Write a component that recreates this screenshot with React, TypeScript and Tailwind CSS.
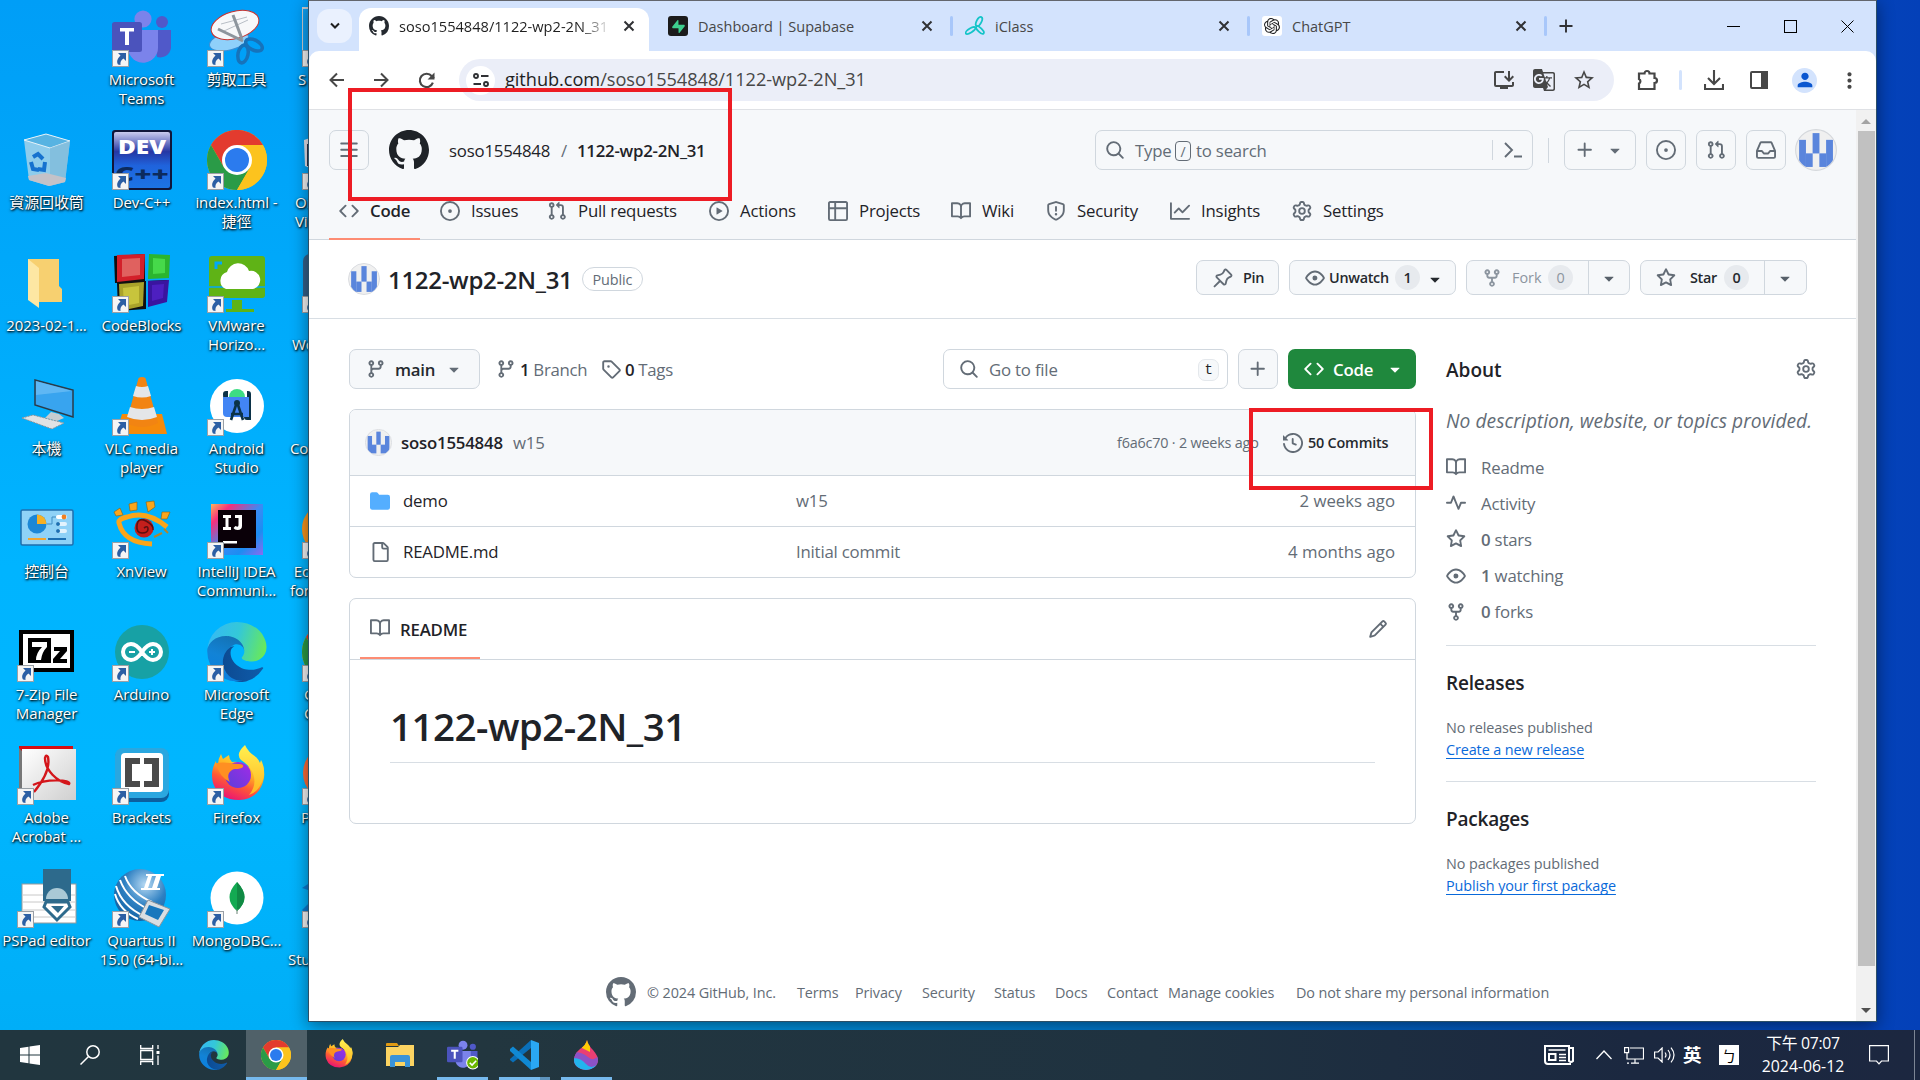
import React from "react";
import { SiSupabase, SiOpenai } from "react-icons/si";
import { MdGTranslate, MdStarBorder, MdMoreVert, MdPerson, MdOutlineInstallDesktop } from "react-icons/md";

/* ---------- 16px line icons ---------- */
const P = {
  code: "m11.28 3.22 4.25 4.25a.75.75 0 0 1 0 1.06l-4.25 4.25a.749.749 0 0 1-1.275-.326.749.749 0 0 1 .215-.734L13.94 8l-3.72-3.72a.749.749 0 0 1 .326-1.275.749.749 0 0 1 .734.215Zm-6.56 0a.751.751 0 0 1 1.042.018.751.751 0 0 1 .018 1.042L2.06 8l3.72 3.72a.749.749 0 0 1-.326 1.275.749.749 0 0 1-.734-.215L.47 8.53a.75.75 0 0 1 0-1.06Z",
  issue: "M8 9.5a1.5 1.5 0 1 0 0-3 1.5 1.5 0 0 0 0 3ZM8 0a8 8 0 1 1 0 16A8 8 0 0 1 8 0ZM1.5 8a6.5 6.5 0 1 0 13 0 6.5 6.5 0 0 0-13 0Z",
  pr: "M1.5 3.25a2.25 2.25 0 1 1 3 2.122v5.256a2.251 2.251 0 1 1-1.5 0V5.372A2.25 2.25 0 0 1 1.5 3.25Zm5.677-.177L9.573.677A.25.25 0 0 1 10 .854V2.5h1A2.5 2.5 0 0 1 13.5 5v5.628a2.251 2.251 0 1 1-1.5 0V5a1 1 0 0 0-1-1h-1v1.646a.25.25 0 0 1-.427.177L7.177 3.427a.25.25 0 0 1 0-.354ZM3.75 2.5a.75.75 0 1 0 0 1.5.75.75 0 0 0 0-1.5Zm0 9.5a.75.75 0 1 0 0 1.5.75.75 0 0 0 0-1.5Zm8.25.75a.75.75 0 1 0 1.5 0 .75.75 0 0 0-1.5 0Z",
  play: "M8 0a8 8 0 1 1 0 16A8 8 0 0 1 8 0ZM1.5 8a6.5 6.5 0 1 0 13 0 6.5 6.5 0 0 0-13 0Zm4.879-2.773 4.264 2.559a.25.25 0 0 1 0 .428l-4.264 2.559A.25.25 0 0 1 6 10.559V5.442a.25.25 0 0 1 .379-.215Z",
  table: "M0 1.75C0 .784.784 0 1.75 0h12.5C15.216 0 16 .784 16 1.75v12.5A1.75 1.75 0 0 1 14.25 16H1.75A1.75 1.75 0 0 1 0 14.25ZM6.5 6.5v8h7.75a.25.25 0 0 0 .25-.25V6.5Zm8-1.5V1.75a.25.25 0 0 0-.25-.25H6.5V5Zm-13 1.5v7.75c0 .138.112.25.25.25H5v-8ZM5 5V1.5H1.75a.25.25 0 0 0-.25.25V5Z",
  book: "M0 1.75A.75.75 0 0 1 .75 1h4.253c1.227 0 2.317.59 3 1.501A3.743 3.743 0 0 1 11.006 1h4.245a.75.75 0 0 1 .75.75v10.5a.75.75 0 0 1-.75.75h-4.507a2.25 2.25 0 0 0-1.591.659l-.622.621a.75.75 0 0 1-1.06 0l-.622-.621A2.25 2.25 0 0 0 5.258 13H.75a.75.75 0 0 1-.75-.75Zm7.251 10.324.004-5.073-.002-2.253A2.25 2.25 0 0 0 5.003 2.5H1.5v9h3.757a3.75 3.75 0 0 1 1.994.574ZM8.755 4.75l-.004 7.322a3.752 3.752 0 0 1 1.992-.572H14.5v-9h-3.495a2.25 2.25 0 0 0-2.25 2.25Z",
  shield: "M7.467.133a1.748 1.748 0 0 1 1.066 0l5.25 1.68A1.75 1.75 0 0 1 15 3.48V7c0 1.566-.32 3.182-1.303 4.682-.983 1.498-2.585 2.813-5.032 3.855a1.697 1.697 0 0 1-1.33 0c-2.447-1.042-4.049-2.357-5.032-3.855C1.32 10.182 1 8.566 1 7V3.48a1.75 1.75 0 0 1 1.217-1.667Zm.61 1.429a.25.25 0 0 0-.153 0l-5.25 1.68a.25.25 0 0 0-.174.238V7c0 1.358.275 2.666 1.057 3.86.784 1.194 2.121 2.34 4.366 3.297a.196.196 0 0 0 .154 0c2.245-.956 3.582-2.104 4.366-3.298C13.225 9.666 13.5 8.36 13.5 7V3.48a.251.251 0 0 0-.174-.237l-5.25-1.68ZM8.75 4.75v3a.75.75 0 0 1-1.5 0v-3a.75.75 0 0 1 1.5 0ZM9 10.5a1 1 0 1 1-2 0 1 1 0 0 1 2 0Z",
  graph: "M1.5 1.75V13.5h13.75a.75.75 0 0 1 0 1.5H.75a.75.75 0 0 1-.75-.75V1.75a.75.75 0 0 1 1.5 0Zm14.28 2.53-5.25 5.25a.75.75 0 0 1-1.06 0L7 7.06 4.28 9.78a.751.751 0 0 1-1.042-.018.751.751 0 0 1-.018-1.042l3.25-3.25a.75.75 0 0 1 1.06 0L10 7.94l4.72-4.72a.751.751 0 0 1 1.042.018.751.751 0 0 1 .018 1.042Z",
  gear: "M8 0a8.2 8.2 0 0 1 .701.031C9.444.095 9.99.645 10.16 1.29l.288 1.107c.018.066.079.158.212.224.231.114.454.243.668.386.123.082.233.09.299.071l1.103-.303c.644-.176 1.392.021 1.82.63.27.385.506.792.704 1.218.315.675.111 1.422-.364 1.891l-.814.806c-.049.048-.098.147-.088.294.016.257.016.515 0 .772-.01.147.038.246.088.294l.814.806c.475.469.679 1.216.364 1.891a7.977 7.977 0 0 1-.704 1.217c-.428.61-1.176.807-1.82.63l-1.102-.302c-.067-.019-.177-.011-.3.071a5.909 5.909 0 0 1-.668.386c-.133.066-.194.158-.211.224l-.29 1.106c-.168.646-.715 1.196-1.458 1.26a8.006 8.006 0 0 1-1.402 0c-.743-.064-1.289-.614-1.458-1.26l-.289-1.106c-.018-.066-.079-.158-.212-.224a5.738 5.738 0 0 1-.668-.386c-.123-.082-.233-.09-.299-.071l-1.103.303c-.644.176-1.392-.021-1.82-.63a8.12 8.12 0 0 1-.704-1.218c-.315-.675-.111-1.422.363-1.891l.815-.806c.05-.048.098-.147.088-.294a6.214 6.214 0 0 1 0-.772c.01-.147-.038-.246-.088-.294l-.815-.806C.635 6.045.431 5.298.746 4.623a7.92 7.92 0 0 1 .704-1.217c.428-.61 1.176-.807 1.82-.63l1.102.302c.067.019.177.011.3-.071.214-.143.437-.272.668-.386.133-.066.194-.158.211-.224l.29-1.106C6.009.645 6.556.095 7.299.03 7.53.01 7.764 0 8 0Zm-.571 1.525c-.036.003-.108.036-.137.146l-.289 1.105c-.147.561-.549.967-.998 1.189-.173.086-.34.183-.5.29-.417.278-.97.423-1.529.27l-1.103-.303c-.109-.03-.175.016-.195.045-.22.312-.412.644-.573.99-.014.031-.021.11.059.19l.815.806c.411.406.562.957.53 1.456a4.709 4.709 0 0 0 0 .582c.032.499-.119 1.05-.53 1.456l-.815.806c-.081.08-.073.159-.059.19.162.346.353.677.573.989.02.03.085.076.195.046l1.102-.303c.56-.153 1.113-.008 1.53.27.161.107.328.204.501.29.447.222.85.629.997 1.189l.289 1.105c.029.109.101.143.137.146a6.6 6.6 0 0 0 1.142 0c.036-.003.108-.036.137-.146l.289-1.105c.147-.561.549-.967.998-1.189.173-.086.34-.183.5-.29.417-.278.97-.423 1.529-.27l1.103.303c.109.029.175-.016.195-.045.22-.313.411-.644.573-.99.014-.031.021-.11-.059-.19l-.815-.806c-.411-.406-.562-.957-.53-1.456a4.709 4.709 0 0 0 0-.582c-.032-.499.119-1.05.53-1.456l.815-.806c.081-.08.073-.159.059-.19a6.464 6.464 0 0 0-.573-.989c-.02-.03-.085-.076-.195-.046l-1.102.303c-.56.153-1.113.008-1.53-.27a4.44 4.44 0 0 0-.501-.29c-.447-.222-.85-.629-.997-1.189l-.289-1.105c-.029-.11-.101-.143-.137-.146a6.6 6.6 0 0 0-1.142 0ZM11 8a3 3 0 1 1-6 0 3 3 0 0 1 6 0ZM9.5 8a1.5 1.5 0 1 0-3.001.001A1.5 1.5 0 0 0 9.5 8Z",
  pin: "m11.294.984 3.722 3.722a1.75 1.75 0 0 1-.504 2.826l-1.327.613a3.089 3.089 0 0 0-1.707 2.084l-.584 2.454c-.317 1.332-1.972 1.8-2.94.832L5.75 11.311 1.78 15.28a.749.749 0 1 1-1.06-1.06l3.969-3.97-2.204-2.204c-.968-.968-.5-2.623.832-2.94l2.454-.584a3.08 3.08 0 0 0 2.084-1.707l.613-1.327a1.75 1.75 0 0 1 2.826-.504ZM6.283 9.723l2.732 2.731a.25.25 0 0 0 .42-.119l.584-2.454a4.586 4.586 0 0 1 2.537-3.098l1.328-.613a.25.25 0 0 0 .072-.404l-3.722-3.722a.25.25 0 0 0-.404.072l-.613 1.328a4.584 4.584 0 0 1-3.098 2.537l-2.454.584a.25.25 0 0 0-.119.42l2.731 2.732Z",
  eye: "M8 2c1.981 0 3.671.992 4.933 2.078 1.27 1.091 2.187 2.345 2.637 3.023a1.62 1.62 0 0 1 0 1.798c-.45.678-1.367 1.932-2.637 3.023C11.67 13.008 9.981 14 8 14c-1.981 0-3.671-.992-4.933-2.078C1.797 10.83.88 9.576.43 8.898a1.62 1.62 0 0 1 0-1.798c.45-.677 1.367-1.931 2.637-3.022C4.33 2.992 6.019 2 8 2ZM1.679 7.932a.12.12 0 0 0 0 .136c.411.622 1.241 1.75 2.366 2.717C5.176 11.758 6.527 12.5 8 12.5c1.473 0 2.825-.742 3.955-1.715 1.124-.967 1.954-2.096 2.366-2.717a.12.12 0 0 0 0-.136c-.412-.621-1.242-1.75-2.366-2.717C10.824 4.242 9.473 3.5 8 3.5c-1.473 0-2.825.742-3.955 1.715-1.124.967-1.954 2.096-2.366 2.717ZM8 10a2 2 0 1 1-.001-3.999A2 2 0 0 1 8 10Z",
  fork: "M5 5.372v.878c0 .414.336.75.75.75h4.5a.75.75 0 0 0 .75-.75v-.878a2.25 2.25 0 1 1 1.5 0v.878a2.25 2.25 0 0 1-2.25 2.25h-1.5v2.128a2.251 2.251 0 1 1-1.5 0V8.5h-1.5A2.25 2.25 0 0 1 3.5 6.25v-.878a2.25 2.25 0 1 1 1.5 0ZM5 3.25a.75.75 0 1 0-1.5 0 .75.75 0 0 0 1.5 0Zm6.75.75a.75.75 0 1 0 0-1.5.75.75 0 0 0 0 1.5Zm-3 8.75a.75.75 0 1 0-1.5 0 .75.75 0 0 0 1.5 0Z",
  star: "M8 .25a.75.75 0 0 1 .673.418l1.882 3.815 4.21.612a.75.75 0 0 1 .416 1.279l-3.046 2.97.719 4.192a.751.751 0 0 1-1.088.791L8 12.347l-3.766 1.98a.75.75 0 0 1-1.088-.79l.72-4.194L.818 6.374a.75.75 0 0 1 .416-1.28l4.21-.611L7.327.668A.75.75 0 0 1 8 .25Zm0 2.445L6.615 5.5a.75.75 0 0 1-.564.41l-3.097.45 2.24 2.184a.75.75 0 0 1 .216.664l-.528 3.084 2.769-1.456a.75.75 0 0 1 .698 0l2.77 1.456-.53-3.084a.75.75 0 0 1 .216-.664l2.24-2.183-3.096-.45a.75.75 0 0 1-.564-.41L8 2.694Z",
  caret: "m4.427 7.427 3.396 3.396a.25.25 0 0 0 .354 0l3.396-3.396A.25.25 0 0 0 11.396 7H4.604a.25.25 0 0 0-.177.427Z",
  branch: "M9.5 3.25a2.25 2.25 0 1 1 3 2.122V6A2.5 2.5 0 0 1 10 8.5H6a1 1 0 0 0-1 1v1.128a2.251 2.251 0 1 1-1.5 0V5.372a2.25 2.25 0 1 1 1.5 0v1.836A2.493 2.493 0 0 1 6 7h4a1 1 0 0 0 1-1v-.628A2.25 2.25 0 0 1 9.5 3.25Zm-6 0a.75.75 0 1 0 1.5 0 .75.75 0 0 0-1.5 0Zm8.25-.75a.75.75 0 1 0 0 1.5.75.75 0 0 0 0-1.5ZM4.25 12a.75.75 0 1 0 0 1.5.75.75 0 0 0 0-1.5Z",
  tag: "M1 7.775V2.75C1 1.784 1.784 1 2.75 1h5.025c.464 0 .91.184 1.238.513l6.25 6.25a1.75 1.75 0 0 1 0 2.474l-5.026 5.026a1.75 1.75 0 0 1-2.474 0l-6.25-6.25A1.752 1.752 0 0 1 1 7.775Zm1.5 0c0 .066.026.13.073.177l6.25 6.25a.25.25 0 0 0 .354 0l5.025-5.025a.25.25 0 0 0 0-.354l-6.25-6.25a.25.25 0 0 0-.177-.073H2.75a.25.25 0 0 0-.25.25ZM6 5a1 1 0 1 1 0 2 1 1 0 0 1 0-2Z",
  search: "M10.68 11.74a6 6 0 0 1-7.922-8.982 6 6 0 0 1 8.982 7.922l3.04 3.04a.749.749 0 0 1-.326 1.275.749.749 0 0 1-.734-.215ZM11.5 7a4.499 4.499 0 1 0-8.997 0A4.499 4.499 0 0 0 11.5 7Z",
  plus: "M7.75 2a.75.75 0 0 1 .75.75V7h4.25a.75.75 0 0 1 0 1.5H8.5v4.25a.75.75 0 0 1-1.5 0V8.5H2.75a.75.75 0 0 1 0-1.5H7V2.75A.75.75 0 0 1 7.75 2Z",
  history: "m.427 1.927 1.215 1.215a8.002 8.002 0 1 1-1.6 5.685.75.75 0 1 1 1.493-.154 6.5 6.5 0 1 0 1.18-4.458l1.358 1.358A.25.25 0 0 1 3.896 6H.25A.25.25 0 0 1 0 5.75V2.104a.25.25 0 0 1 .427-.177ZM7.75 4a.75.75 0 0 1 .75.75v2.992l2.028.812a.75.75 0 0 1-.557 1.392l-2.5-1A.751.751 0 0 1 7 8.25v-3.5A.75.75 0 0 1 7.75 4Z",
  pencil: "M11.013 1.427a1.75 1.75 0 0 1 2.474 0l1.086 1.086a1.75 1.75 0 0 1 0 2.474l-8.61 8.61c-.21.21-.47.364-.756.445l-3.251.93a.75.75 0 0 1-.927-.928l.929-3.25c.081-.286.235-.547.445-.758l8.61-8.61Zm.176 4.823L9.75 4.81l-6.286 6.287a.253.253 0 0 0-.064.108l-.558 1.953 1.953-.558a.253.253 0 0 0 .108-.064Zm1.238-3.763a.25.25 0 0 0-.354 0L10.811 3.75l1.439 1.44 1.263-1.263a.25.25 0 0 0 0-.354Z",
  pulse: "M6 2c.306 0 .582.187.696.471L10 10.731l1.304-3.26A.751.751 0 0 1 12 7h3.25a.75.75 0 0 1 0 1.5h-2.742l-1.812 4.528a.751.751 0 0 1-1.392 0L6 4.77 4.696 8.03A.75.75 0 0 1 4 8.5H.75a.75.75 0 0 1 0-1.5h2.742l1.812-4.529A.751.751 0 0 1 6 2Z",
  bars: "M1 2.75A.75.75 0 0 1 1.75 2h12.5a.75.75 0 0 1 0 1.5H1.75A.75.75 0 0 1 1 2.75Zm0 5A.75.75 0 0 1 1.75 7h12.5a.75.75 0 0 1 0 1.5H1.75A.75.75 0 0 1 1 7.75ZM1.75 12h12.5a.75.75 0 0 1 0 1.5H1.75a.75.75 0 0 1 0-1.5Z",
  inbox: "M2.8 2.06A1.75 1.75 0 0 1 4.41 1h7.18c.7 0 1.333.417 1.61 1.06l2.74 6.395c.04.093.06.194.06.295v4.5A1.75 1.75 0 0 1 14.25 15H1.75A1.75 1.75 0 0 1 0 13.25v-4.5c0-.101.02-.202.06-.295Zm1.61.44a.25.25 0 0 0-.23.152L1.887 8H4.75a.75.75 0 0 1 .6.3L6.625 10h2.75l1.275-1.7a.75.75 0 0 1 .6-.3h2.863L11.82 2.652a.25.25 0 0 0-.23-.152Zm10.09 7h-2.875l-1.275 1.7a.75.75 0 0 1-.6.3h-3.5a.75.75 0 0 1-.6-.3L4.375 9.5H1.5v3.75c0 .138.112.25.25.25h12.5a.25.25 0 0 0 .25-.25Z",
  github: "M8 0c4.42 0 8 3.58 8 8a8.013 8.013 0 0 1-5.45 7.59c-.4.08-.55-.17-.55-.38 0-.27.01-1.13.01-2.2 0-.75-.25-1.23-.54-1.48 1.78-.2 3.65-.88 3.65-3.95 0-.88-.31-1.59-.82-2.15.08-.2.36-1.02-.08-2.12 0 0-.67-.22-2.2.82-.64-.18-1.32-.27-2-.27-.68 0-1.36.09-2 .27-1.53-1.03-2.2-.82-2.2-.82-.44 1.1-.16 1.92-.08 2.12-.51.56-.82 1.28-.82 2.15 0 3.06 1.86 3.75 3.64 3.95-.23.2-.44.55-.51 1.07-.46.21-1.61.55-2.33-.66-.15-.24-.6-.83-1.23-.82-.67.01-.27.38.01.53.34.19.73.9.82 1.13.16.45.68 1.31 2.69.94 0 .67.01 1.3.01 1.49 0 .21-.15.45-.55.38A7.995 7.995 0 0 1 0 8c0-4.42 3.58-8 8-8Z",
  file: "M2 1.75C2 .784 2.784 0 3.75 0h6.586c.464 0 .909.184 1.237.513l2.914 2.914c.329.328.513.773.513 1.237v9.586A1.75 1.75 0 0 1 13.25 16h-9.5A1.75 1.75 0 0 1 2 14.25Zm1.75-.25a.25.25 0 0 0-.25.25v12.5c0 .138.112.25.25.25h9.5a.25.25 0 0 0 .25-.25V6h-2.75A1.75 1.75 0 0 1 9 4.25V1.5Zm6.75.062V4.25c0 .138.112.25.25.25h2.688l-.011-.013-2.914-2.914-.013-.011Z",
  folder: "M1.75 1A1.75 1.75 0 0 0 0 2.75v10.5C0 14.216.784 15 1.75 15h12.5A1.75 1.75 0 0 0 16 13.25v-8.5A1.75 1.75 0 0 0 14.25 3H7.5a.25.25 0 0 1-.2-.1l-.9-1.2C6.07 1.26 5.55 1 5 1H1.75Z",
};

function Oct({ p, className = "size-5 text-[#636c76]" }: { p: keyof typeof P; className?: string }) {
  return (
    <svg viewBox="0 0 16 16" fill="currentColor" className={`shrink-0 ${className}`}>
      <path d={P[p]} />
    </svg>
  );
}

function Avatar({ className }: { className: string }) {
  const c = 6.75;
  const cells = [[2, 0, 1, 3], [0, 1, 1, 4], [4, 1, 1, 4], [1, 3, 1, 2], [3, 3, 1, 2]];
  return (
    <svg viewBox="0 0 42 42" className={`shrink-0 ${className}`}>
      <circle cx="21" cy="21" r="20.4" fill="#f0f0f0" stroke="#d5d8dc" strokeWidth="1.1" />
      <clipPath id="avatar-clip"><circle cx="21" cy="21" r="19.8" /></clipPath>
      <g clipPath="url(#avatar-clip)" fill="#5a85dc">
        {cells.map(([x, y, w, h], i) => (
          <rect key={i} x={4.1 + x * c} y={4.1 + y * c} width={w * c + 0.1} height={h * c + 0.1} />
        ))}
      </g>
    </svg>
  );
}

/* ---------- application logos ---------- */
function Chrome({ className = "size-full" }) {
  return (
    <svg viewBox="0 0 60 60" className={className}>
      <circle cx="30" cy="30" r="30" fill="#fcc31e" />
      <path d="M4 15A30 30 0 0 1 56 15H30L17 37.5Z" fill="#e33b2e" />
      <path d="M4 15A30 30 0 0 0 30 60L43 37.5H17Z" fill="#2a9b47" />
      <path d="M30 60A30 30 0 0 0 56 15H30L43 37.5Z" fill="#fcc31e" />
      <circle cx="30" cy="30" r="15" fill="#fff" />
      <circle cx="30" cy="30" r="12" fill="#2b7bee" />
    </svg>
  );
}

function Edge({ className = "size-full" }) {
  return (
    <svg viewBox="0 0 257 259" className={className}>
      <defs>
        <linearGradient id="edge-a" x1="0" y1=".3" x2="1" y2=".5"><stop offset="0" stopColor="#35b9f5" /><stop offset=".5" stopColor="#34c8d8" /><stop offset="1" stopColor="#67e85d" /></linearGradient>
        <linearGradient id="edge-b" x1=".6" y1="0" x2=".3" y2="1"><stop offset="0" stopColor="#1470b0" /><stop offset=".5" stopColor="#1283d6" /><stop offset="1" stopColor="#0a7fe0" /></linearGradient>
        <linearGradient id="edge-c" x1="0" y1="0" x2="1" y2="0"><stop offset="0" stopColor="#0c4a92" /><stop offset="1" stopColor="#0f5caa" /></linearGradient>
      </defs>
      <path fill="url(#edge-c)" d="M235.68 195.46a93.73 93.73 0 0 1-10.54 4.71 101.87 101.87 0 0 1-35.9 6.46c-47.32 0-88.54-32.55-88.54-74.32A31.48 31.48 0 0 1 117.13 105c-42.8 1.8-53.8 46.4-53.8 72.53 0 73.88 68.09 81.37 82.76 81.37 7.91 0 19.84-2.3 27-4.56l1.31-.44a128.34 128.34 0 0 0 66.6-52.8 4 4 0 0 0-5.32-5.64Z" />
      <path fill="url(#edge-b)" d="M105.73 241.42A79.2 79.2 0 0 1 83 220.08a80.72 80.72 0 0 1 29.53-120c3.12-1.47 8.45-4.13 15.54-4a32.35 32.35 0 0 1 25.69 13 31.88 31.88 0 0 1 6.36 18.66c0-.21 24.46-79.6-80-79.6-43.9 0-80 41.66-80 78.21a130.15 130.15 0 0 0 12.11 56 128 128 0 0 0 156.38 67.11 75.55 75.55 0 0 1-62.78-8Z" />
      <path fill="url(#edge-a)" d="M152.33 148.86c-.81 1.05-3.3 2.5-3.3 5.66 0 2.61 1.7 5.12 4.72 7.23 14.38 10 41.49 8.68 41.56 8.68a59.56 59.56 0 0 0 30.27-8.35A61.38 61.38 0 0 0 256 109.2c.26-22.41-8-37.31-11.34-43.91C223.46 23.84 177.72 0 128 0A128 128 0 0 0 0 126.2c.48-36.54 36.8-66.05 80-66.05 3.5 0 23.46.34 42 10.07 16.34 8.58 24.9 18.94 30.85 29.21 6.18 10.67 7.28 24.15 7.28 29.52s-2.74 13.33-7.8 19.91Z" />
    </svg>
  );
}

function Firefox({ className = "size-full" }) {
  return (
    <svg viewBox="0 0 60 60" className={className}>
      <defs>
        <linearGradient id="ff-a" x1=".8" y1="0" x2=".3" y2="1"><stop offset="0" stopColor="#ffe93f" /><stop offset=".4" stopColor="#ffb223" /><stop offset=".65" stopColor="#ff5a34" /><stop offset="1" stopColor="#ea0f78" /></linearGradient>
        <linearGradient id="ff-b" x1="0" y1="1" x2="1" y2="0"><stop offset="0" stopColor="#5b3fd8" /><stop offset="1" stopColor="#a32ae8" /></linearGradient>
        <linearGradient id="ff-c" x1=".5" y1="0" x2=".5" y2="1"><stop offset="0" stopColor="#fff150" /><stop offset="1" stopColor="#ffb521" /></linearGradient>
      </defs>
      <path d="M14 9q1 3 2 5l6-4q0 4 3 7 10-1 16 5l14-3q4 9 1 18Q51 54 32 55 12 55 6 38 3 26 9 16q0 3 2 4 0-6 3-11Z" fill="url(#ff-a)" />
      <path d="M38 0q3 7 11 12 3 3 4 6l1-3q5 9 2 19-4 13-14 16 7-8 5-18Q45 22 34 15q-6-6 4-15Z" fill="url(#ff-c)" />
      <circle cx="31" cy="30" r="13" fill="url(#ff-b)" />
      <path d="M9 18q7-1 14 0 4 1 9 1 5 0 4 3-2 2-8 2-3 0-6 4-2 4 1 9Q12 32 9 18Z" fill="#ff8f22" />
    </svg>
  );
}

function Teams({ className = "size-full", status = false }) {
  return (
    <svg viewBox="0 0 60 60" className={className}>
      <circle cx="50" cy="15" r="6" fill="#5059c9" />
      <path d="M42 23h17v18a11 11 0 0 1-14 9Z" fill="#5059c9" />
      <circle cx="31" cy="12" r="8.6" fill="#7b83eb" />
      <path d="M17 23h29v18a15 15 0 0 1-29 5Z" fill="#7b83eb" />
      <rect y="15" width="30" height="30" rx="2.5" fill="#4b53bc" />
      <path d="M8 21h14v3.6h-5V38h-4V24.600H8Z" fill="#fff" />
      {status && (
        <g>
          <circle cx="50" cy="46" r="12" fill="#6bb700" stroke="#fff" strokeWidth="2" />
          <path d="m44 46 4.500 4.500 8-8.500" fill="none" stroke="#fff" strokeWidth="3" />
        </g>
      )}
    </svg>
  );
}

const icon = "size-full";
const Snip = () => (
  <svg viewBox="0 0 60 60" className={icon}>
    <ellipse cx="22" cy="34" rx="20" ry="9" fill="#8fd0fa" stroke="#3a8fd6" transform="rotate(-14 22 34)" />
    <ellipse cx="28" cy="18" rx="24.500" ry="13.500" fill="#f7f8fa" stroke="#c9332f" strokeWidth="1" transform="rotate(-16 28 18)" />
    <path d="M14 17 40 10M17 24l24-11" stroke="#b8bec6" />
    <path d="M26 8 35 32M11 22 36 34" stroke="#8d959d" strokeWidth="3" />
    <ellipse cx="36" cy="47" rx="5" ry="9" fill="none" stroke="#1673bb" strokeWidth="3.500" transform="rotate(12 36 47)" />
    <ellipse cx="47" cy="38" rx="9" ry="5" fill="none" stroke="#1673bb" strokeWidth="3.500" transform="rotate(28 47 38)" />
  </svg>
);
const Bin = () => (
  <svg viewBox="0 0 60 60" className={icon}>
    <path d="M7 10 29 4l24 7-5 41-16 4-20-6Z" fill="#a7d3ea" fillOpacity=".85" />
    <path d="M7 10 29 4l24 7-20 7Z" fill="#57b3e2" stroke="#e6f3fa" />
    <path d="M33 18v38l15-4 5-41Z" fill="#7fb9d8" fillOpacity=".7" />
    <path d="m11 46 18-3 20 5-1 4-16 4-20-6Z" fill="#c4c2c8" />
    <path d="m16 27 5-3 5 5M14 32l2 7 6 1M28 32l-1 8-6-1" fill="none" stroke="#1672cf" strokeWidth="4" />
  </svg>
);
const DevCpp = () => (
  <svg viewBox="0 0 60 60" className={icon}>
    <defs><linearGradient id="dev" x1="0" y1="0" x2="0" y2="1"><stop offset="0" stopColor="#c9cbee" /><stop offset=".35" stopColor="#2637a4" /><stop offset=".6" stopColor="#1f63dc" /><stop offset="1" stopColor="#1c74e4" /></linearGradient></defs>
    <rect width="60" height="60" rx="3" fill="#10163a" />
    <rect x="2" y="2" width="56" height="56" rx="2" fill="url(#dev)" />
    <text x="6" y="24" textLength="48" lengthAdjust="spacingAndGlyphs" fontFamily="Open Sans" fontWeight="800" fontSize="19" fill="#fff">DEV</text>
    <text x="3" y="51" textLength="54" lengthAdjust="spacingAndGlyphs" fontFamily="Open Sans" fontWeight="800" fontSize="20" fill="#0c2a5c">C++</text>
  </svg>
);
const Folder = () => (
  <svg viewBox="0 0 60 60" className={icon}>
    <path d="M11 6h31v27l3 3v13H14Z" fill="#f7d070" />
    <path d="m11 6 11 9v40L11 47Z" fill="#fde7a3" />
  </svg>
);
const CodeBlocks = () => (
  <svg viewBox="0 0 60 60" className={icon}>
    <path d="m2 3 31-2v27l23-1-1 1H34v28L6 58l-1-28H3Z" fill="#101010" />
    <path d="m5 2 28-1-1 25-27 3Z" fill="#d3202a" /><path d="m10 6 18-1v17l-18 2Z" fill="#e0615f" />
    <path d="m37 1 21 1-1 23-21 1Z" fill="#2bb52f" /><path d="m41 5 12 1v14l-12 1Z" fill="#46d94a" />
    <path d="m7 31 25-2-1 24-23 5Z" fill="#a9a32a" /><path d="m11 35 16-2v17l-15 3Z" fill="#c8c43c" />
    <path d="m36 28 21-1-2 22-19 5Z" fill="#3a159f" /><path d="m40 32 12-1-1 14-11 3Z" fill="#4d1fc0" />
  </svg>
);
const VMware = () => (
  <svg viewBox="0 0 60 60" className={icon}>
    <rect x="2" y="3" width="56" height="42" rx="3" fill="#5fb316" />
    <path d="M25 47h10v9h12v3H19v-3h6Z" fill="#5fb316" />
    <path d="M2 34h56" stroke="#00a8fa" strokeWidth="1.500" />
    <path d="M9 16V10h6" fill="none" stroke="#00a8fa" strokeWidth="3" />
    <path d="M19 36a9 9 0 0 1 1-17 11.500 11.500 0 0 1 22-1 9 9 0 0 1 4 18Z" fill="#fff" />
  </svg>
);
const ThisPC = () => (
  <svg viewBox="0 0 60 60" className={icon}>
    <path d="m18 4 38 10v27L18 29Z" fill="#38a4ef" stroke="#2b3b49" strokeWidth="1.500" />
    <path d="m19 5 36 10-36 4Z" fill="#79c5f7" fillOpacity=".6" />
    <path d="m34 36 8 2 5 4-7 3-12-3Z" fill="#c7ccd0" />
    <path d="m5 42 11-3 31 8-12 6Z" fill="#dfe2e4" stroke="#8d959b" strokeDasharray="2 1" />
  </svg>
);
const VLC = () => (
  <svg viewBox="0 0 60 60" className={icon}>
    <path d="M10 38h40l5 20H4Z" fill="#f58a0b" />
    <path d="M26 4q0-3 4-3t4 3l12 43q-16 8-32 0Z" fill="#f28412" />
    <path d="m24 10-3 10q9 3 18 0l-3-10q-6 2-12 0ZM18 31l-3 10q15 6 30 0l-3-10q-12 4-24 0Z" fill="#e4e6e8" />
  </svg>
);
const AndroidStudio = () => (
  <svg viewBox="0 0 60 60" className={icon}>
    <circle cx="30" cy="30" r="27" fill="#fff" />
    <path d="M16 18q0-3 3-3h22q3 0 3 3v26h-4q-3 0-3-3v-2H17Z" fill="#0b3247" />
    <path d="M21 15h19v7H21Z" fill="#fff" />
    <path d="M16 21h26v20H20q-4 0-4-4Z" fill="#4285f4" />
    <path d="M22 21a8 8 0 0 1 16 0Z" fill="#3ddc84" />
    <path d="m30 26-6 18M30 26l6 18M24 38h12" stroke="#0b3247" strokeWidth="2.600" fill="none" />
    <circle cx="30" cy="27" r="3" fill="#0b3247" />
  </svg>
);
const ControlPanel = () => (
  <svg viewBox="0 0 60 60" className={icon}>
    <rect x="4" y="11" width="52" height="35" rx="1.500" fill="#8fd2f7" stroke="#1f6fae" strokeWidth="1.500" />
    <circle cx="20" cy="25" r="9.500" fill="#1c87d6" /><path d="M20 25V15.500A9.500 9.500 0 0 1 29.500 25Z" fill="#f7b025" />
    <path d="M30 25h5v-7h4" fill="none" stroke="#3f8dc4" />
    <rect x="39" y="16" width="11" height="4" rx="2" fill="#fff" /><circle cx="47" cy="18" r="2.400" fill="#f08021" />
    <rect x="39" y="23" width="11" height="4" rx="2" fill="#e2f3fd" /><circle cx="41" cy="25" r="2" fill="#1b6fb3" />
    <rect x="39" y="30" width="11" height="4" rx="2" fill="#e2f3fd" /><circle cx="41" cy="32" r="2" fill="#1b6fb3" />
    <path d="M11 40h18" stroke="#f3a62e" strokeWidth="2" /><path d="M31 40h18" stroke="#1b6fb3" strokeWidth="2" />
  </svg>
);
const XnView = () => (
  <svg viewBox="0 0 60 60" className={icon}>
    <g fill="#fba51a" stroke="#8a5f0d" strokeWidth=".6"><path d="m2 13 6-4 3 7-7 1ZM17 5l8-2v8l-7 1ZM34 3l8-1 1 6-7 5ZM50 13l8 0-3 7-6 0Z" /></g>
    <path d="M55 28Q35 11 15 18 6 20 7 24q5 20 33 21" fill="none" stroke="#fba51a" strokeWidth="5" />
    <circle cx="32" cy="29" r="9.500" fill="#c31f1c" />
    <path d="M32 29q4-3 4 1t-6 4-5-8 9-4 7 9" fill="none" stroke="#5a0f12" strokeWidth="1.600" />
    <path d="m42 38 8-4M52 30l4 4" stroke="#b4832a" strokeWidth="2" />
  </svg>
);
const IntelliJ = () => (
  <svg viewBox="0 0 60 60" className={icon}>
    <defs><linearGradient id="ij" x1="0" y1="0" x2="1" y2="1"><stop offset="0" stopColor="#ffb25a" /><stop offset=".2" stopColor="#f4307c" /><stop offset=".5" stopColor="#3a8bf5" /><stop offset=".75" stopColor="#1c8df2" /><stop offset="1" stopColor="#8c6bf0" /></linearGradient></defs>
    <rect x="4" y="5" width="52" height="51" fill="url(#ij)" />
    <rect x="11" y="11" width="38" height="38" fill="#0a0008" />
    <path d="M16 16h8v3h-2.500v9H24v3h-8v-3h2.500v-9H16ZM28 16h7v11q0 4-4.500 4-3 0-4-2l2-2q3 2 3-1v-7H28Z" fill="#fff" />
    <rect x="16" y="42" width="14" height="2.500" fill="#fff" />
  </svg>
);
const SevenZip = () => (
  <svg viewBox="0 0 60 60" className={icon}>
    <rect x="2" y="8" width="55" height="42" fill="#000" /><rect x="6" y="12" width="47" height="34" fill="#fff" />
    <rect x="11" y="16" width="23" height="25" fill="#000" />
    <path d="M15 20h15v5q-5 5-6 13h-5q0-7 6-13H15Z" fill="#fff" />
    <path d="M37 25h13v4l-7 8h7v4H36v-4l7-8h-6Z" fill="#000" />
  </svg>
);
const Arduino = () => (
  <svg viewBox="0 0 60 60" className={icon}>
    <circle cx="30" cy="30" r="27" fill="#17a1a5" />
    <path d="M30 30c-4-6-7-8-11-8a8 8 0 0 0 0 16c4 0 7-2 11-8s7-8 11-8a8 8 0 0 1 0 16c-4 0-7-2-11-8Z" fill="none" stroke="#fff" strokeWidth="4" />
    <path d="M17 30h6M37 30h6M40 27v6" stroke="#fff" strokeWidth="2" />
  </svg>
);
const Acrobat = () => (
  <svg viewBox="0 0 60 60" className={icon}>
    <defs><linearGradient id="acro" x1="0" y1="0" x2="1" y2="1"><stop offset="0" stopColor="#fff" /><stop offset="1" stopColor="#cfcfcf" /></linearGradient></defs>
    <path d="M2 1h54v5H5v47l-3-4Z" fill="#d80d12" /><path d="M2 3l3 3v46l-3-4Z" fill="#777" />
    <rect x="5" y="4" width="54" height="51" fill="url(#acro)" />
    <path d="M17 47C27 35 33 22 31 12q-2-3-3 1c0 12 12 24 24 26 3-4-22-6-36 1" fill="none" stroke="#d4151a" strokeWidth="2.400" />
  </svg>
);
const Brackets = () => (
  <svg viewBox="0 0 60 60" className={icon}>
    <rect x="3" y="5" width="54" height="52" rx="8" fill="#0c5f9f" /><rect x="3" y="3" width="54" height="50" rx="8" fill="#2aa7e0" />
    <rect x="9" y="8" width="42" height="39" rx="4" fill="#fff" />
    <path d="M28 13H13v29h15v-6h-8V19h8ZM32 13h15v29H32v-6h8V19h-8Z" fill="#4a4a4a" />
  </svg>
);
const PSPad = () => (
  <svg viewBox="0 0 60 60" className={icon}>
    <rect x="5" y="16" width="54" height="39" fill="#fff" stroke="#9a9a9a" />
    <path d="M6 27h52M6 34h52M6 42h52M6 49h52" stroke="#c8c8c8" />
    <rect x="26" y="1" width="28" height="32" fill="#2d6a8c" />
    <path d="M29 31a11 11 0 0 1 22 0Z" fill="#a9c9d6" />
    <path d="M29 34h22l2 5-13 13-13-13Z" fill="#fff" stroke="#2d6a8c" strokeWidth="3" /><path d="M34 38h13l-6 7Z" fill="#2d6a8c" />
  </svg>
);
const Quartus = () => (
  <svg viewBox="0 0 60 60" className={icon}>
    <defs><radialGradient id="qu" cx=".6" cy=".3" r=".8"><stop offset="0" stopColor="#b6d9f3" /><stop offset=".5" stopColor="#2e80c2" /><stop offset="1" stopColor="#0c5a9c" /></radialGradient></defs>
    <circle cx="28" cy="27" r="26" fill="url(#qu)" />
    <path d="M4 18q6 20 28 30M8 12q7 19 28 29M13 8q6 17 27 26M3 26q5 17 23 25" fill="none" stroke="#fff" strokeWidth="2" />
    <path d="m36 32 22 9-11 18-20-10Z" fill="#d9dee2" stroke="#8a949c" /><path d="m37 37 15 5-6 10-13-6Z" fill="#1777bd" />
    <path d="M34 6h18v2h-3l-4 12h3v2H29v-2h3l4-12h-2ZM40 8l-4 12h4l4-12Z" fill="#fff" fillRule="evenodd" />
  </svg>
);
const Mongo = () => (
  <svg viewBox="0 0 60 60" className={icon}>
    <circle cx="30" cy="30" r="26.500" fill="#fff" />
    <path d="M30 14q15 16 0 29-15-13 0-29Z" fill="#13aa52" /><path d="M30 14q15 16 0 29Z" fill="#108a44" /><path d="M30 41v5" stroke="#6c8577" />
  </svg>
);

/* icons partly covered by the browser window */
const PageIcon = () => <svg viewBox="0 0 60 60" className={icon}><path d="M0 1h40v59H0Z" fill="#0ea2f5" stroke="#c9ccd0" strokeWidth="2" /></svg>;
const BoxIcon = () => <svg viewBox="0 0 60 60" className={icon}><path d="m2 10 6-2v30l-5-2Z" fill="#e8e4ec" /><path d="M5 14h8v22H5Z" fill="#32324a" /></svg>;
const SquareIcon = () => <svg viewBox="0 0 60 60" className={icon}><rect x="1" y="1" width="58" height="58" rx="7" fill="#33618b" /></svg>;
const RingIcon = () => <svg viewBox="0 0 60 60" className={icon}><circle cx="27" cy="30" r="24" fill="none" stroke="#f7941e" strokeWidth="6" /></svg>;
const DiscIcon = () => <svg viewBox="0 0 60 60" className={icon}><circle cx="30" cy="28" r="29" fill="#ff6c37" /></svg>;
const RibbonIcon = () => <svg viewBox="0 0 60 60" className={icon}><path d="M0 20 30 0v30ZM0 42l14-14v26Z" fill="#0b79cf" /></svg>;
const None = () => null;

type Item = [React.ComponentType, string[], boolean, string?] | null;
const desktop: Item[] = [
  null, [Teams, ["Microsoft", "Teams"], true], [Snip, ["剪取工具"], true], [PageIcon, ["S"], true, "pl-[14px]"],
  [Bin, ["資源回收筒"], false], [DevCpp, ["Dev-C++"], true], [Chrome, ["index.html -", "捷徑"], true], [BoxIcon, ["Or", "Vi"], true, "pl-[11px]"],
  [Folder, ["2023-02-1..."], false], [CodeBlocks, ["CodeBlocks"], true], [VMware, ["VMware", "Horizo..."], true], [SquareIcon, ["", "Wo"], true, "pl-[8px]"],
  [ThisPC, ["本機"], false], [VLC, ["VLC media", "player"], true], [AndroidStudio, ["Android", "Studio"], true], [None, ["Co"], false, "pl-[6px]"],
  [ControlPanel, ["控制台"], false], [XnView, ["XnView"], true], [IntelliJ, ["IntelliJ IDEA", "Communi..."], true], [RingIcon, [" Ec", "for"], true, "pl-[6px]"],
  [SevenZip, ["7-Zip File", "Manager"], true], [Arduino, ["Arduino"], true], [Edge, ["Microsoft", "Edge"], true], [Chrome, ["G", "C"], true, "pl-[20px]"],
  [Acrobat, ["Adobe", "Acrobat ..."], true], [Brackets, ["Brackets"], true], [Firefox, ["Firefox"], true], [DiscIcon, ["P"], true, "pl-[17px]"],
  [PSPad, ["PSPad editor"], true], [Quartus, ["Quartus II", "15.0 (64-bi..."], true], [Mongo, ["MongoDBC..."], true], [RibbonIcon, ["", "Stu"], true, "pl-[4px]"],
];

function DesktopIcon({ item }: { item: Item }) {
  if (!item) return <div />;
  const [Icon, lines, shortcut, indent] = item;
  return (
    <div className="flex flex-col items-center">
      <div className="relative size-[60px]">
        <Icon />
        {shortcut && (
          <div className="absolute bottom-0 left-0 flex size-[17px] items-center justify-center border border-[#9aa0a6] bg-[#f5f5f5]">
            <svg viewBox="0 0 15 15" className="size-[15px]">
              <path d="M5 2h8v8l-2.500-2.500C8 9 7 11 7.500 14L5 13.500C3 10 5 7 7.500 4.500Z" fill="#2c5fa4" />
            </svg>
          </div>
        )}
      </div>
      <div className={`mt-[3px] flex w-full flex-col whitespace-pre text-[15px] leading-[19px] tracking-[-0.1px] text-white [text-shadow:1px_1px_2px_rgba(0,0,0,.95),0_1px_3px_rgba(0,0,0,.7)] ${indent ? `items-start ${indent}` : "items-center"}`}>
        {lines.map((l, i) => <span key={i} className="h-[19px]">{l}</span>)}
      </div>
    </div>
  );
}

/* ---------- browser chrome ---------- */
function X({ className = "" }) {
  return (
    <svg viewBox="0 0 12 12" className={`size-[12px] shrink-0 ${className}`}>
      <path d="M1.500 1.500l9 9M10.500 1.500l-9 9" stroke="#303134" strokeWidth="2" />
    </svg>
  );
}

function Tab({ children, title }: { children: React.ReactNode; title: string }) {
  return (
    <div className="flex h-[50px] w-[297px] items-center pl-[12px]">
      <div className="flex size-[20px] shrink-0 items-center justify-center">{children}</div>
      <span className="ml-[10px] flex-1 pt-[2px] text-[14.5px] text-[#474747]">{title}</span>
      <X className="mr-[17px]" />
      <div className="h-5 w-[3px] rounded-full bg-[#a8c7fa]" />
    </div>
  );
}

function TabStrip() {
  return (
    <div className="flex h-[50px] shrink-0 items-center bg-[#d3e3fd]">
      <div className="ml-2 flex h-[34px] w-[35px] items-center justify-center rounded-[12px] bg-[#eaf1fe]">
        <svg viewBox="0 0 12 12" className="size-3"><path d="m2 3.500 4 4 4-4" fill="none" stroke="#1f1f1f" strokeWidth="2" /></svg>
      </div>
      <div className="ml-[7px] flex h-[43px] w-[290px] items-center self-end rounded-t-[12px] bg-white pb-[7px] pl-[10px] pr-[14px]">
        <Oct p="github" className="size-5 text-[#24292f]" />
        <span className="ml-[10px] w-[212px] overflow-hidden whitespace-nowrap pt-[2px] text-[14.600px] text-[#1f1f1f] [mask-image:linear-gradient(90deg,#000_86%,transparent)]">soso1554848/1122-wp2-2N_31</span>
        <X className="ml-auto" />
      </div>
      <div className="ml-[7px] flex">
        <Tab title="Dashboard | Supabase"><div className="flex size-5 items-center justify-center rounded-[3px] bg-[#1c1c1c]"><SiSupabase className="size-[13px] text-[#3ecf8e]" /></div></Tab>
        <Tab title="iClass">
          <svg viewBox="0 0 20 20" className="size-[20px]"><g fill="none" stroke="#14c4c8" strokeWidth="1.800"><ellipse cx="14" cy="5.500" rx="2.400" ry="5" transform="rotate(28 14 5.500)" /><ellipse cx="5.500" cy="14.500" rx="2" ry="5.500" transform="rotate(58 5.500 14.500)" /><ellipse cx="15" cy="14" rx="2" ry="5" transform="rotate(-45 15 14)" /></g></svg>
        </Tab>
        <Tab title="ChatGPT"><div className="flex size-5 items-center justify-center rounded-[3px] bg-white"><SiOpenai className="size-[16px] text-[#202123]" /></div></Tab>
      </div>
      <svg viewBox="0 0 14 14" className="ml-[12px] size-[14px]"><path d="M7 .5v13M.5 7h13" stroke="#303134" strokeWidth="1.900" /></svg>
      <div className="ml-auto flex items-center gap-[44px] pr-[22px]">
        <div className="h-px w-[13px] bg-black" />
        <div className="size-[13px] border border-black" />
        <svg viewBox="0 0 13 13" className="size-[13px]"><path d="M.5.5l12 12M12.500.5l-12 12" stroke="#000" /></svg>
      </div>
    </div>
  );
}

function Toolbar() {
  return (
    <div className="bg-[#d3e3fd]">
      <div className="flex h-[59px] items-center rounded-t-[10px] border-b border-[#dfe1e5] bg-white text-[#474747]">
        <svg viewBox="0 0 16 16" className="ml-[20px] size-4"><path d="M15 8H2M8 1.500 1.500 8 8 14.500" fill="none" stroke="currentColor" strokeWidth="2" /></svg>
        <svg viewBox="0 0 16 16" className="ml-[28px] size-4"><path d="M1 8h13M8 1.500 14.500 8 8 14.500" fill="none" stroke="currentColor" strokeWidth="2" /></svg>
        <svg viewBox="0 0 16 16" className="ml-[29px] size-[17px]"><path d="M14 10A6.300 6.300 0 1 1 13 4l2 2" fill="none" stroke="currentColor" strokeWidth="2" /><path d="M15.500.5v6.500H9Z" fill="currentColor" /></svg>
        <div className="ml-[24px] flex h-[42px] w-[1155px] items-center rounded-full bg-[#ebeef8] pl-[7px]">
          <div className="flex size-[29px] items-center justify-center rounded-full bg-white">
            <svg viewBox="0 0 16 16" className="size-4" fill="none" stroke="#303134" strokeWidth="1.900"><circle cx="3" cy="4" r="2" /><path d="M8 4h7.500M.5 12H8" /><circle cx="13" cy="12" r="2" /></svg>
          </div>
          <span className="ml-[10px] text-[18.200px] tracking-[-0.05px] text-[#474747]"><span className="text-[#1f1f1f]">github.com</span>/soso1554848/1122-wp2-2N_31</span>
          <div className="ml-auto flex items-center gap-[16px] pr-[18px]">
            <MdOutlineInstallDesktop className="size-6" />
            <MdGTranslate className="size-6" />
            <MdStarBorder className="size-6" />
          </div>
        </div>
        <svg viewBox="0 0 22 22" className="ml-[23px] size-[22px]"><path d="M2 4.500h5.500a2.500 2.500 0 0 1 5 0H17.500v4.500a2.500 2.500 0 0 1 0 5v6H2v-5.500a2.500 2.500 0 0 0 0-4.500Z" fill="none" stroke="currentColor" strokeWidth="2.200" /></svg>
        <div className="ml-[20px] h-5 w-[3px] rounded-full bg-[#d3e3fd]" />
        <svg viewBox="0 0 20 20" className="ml-[22px] size-[20px]"><path d="M10 0v13M4 8l6 6 6-6M1 14v5h18v-5" fill="none" stroke="currentColor" strokeWidth="2.100" /></svg>
        <svg viewBox="0 0 20 20" className="ml-[25px] size-[20px]"><rect x="2" y="2" width="16" height="16" rx="1" fill="none" stroke="currentColor" strokeWidth="2" /><path d="M12 1h7v18h-7Z" fill="currentColor" /></svg>
        <div className="ml-[23px] flex size-[25px] items-center justify-center rounded-full bg-[#d3e3fd]"><MdPerson className="size-[22px] text-[#0b57d0]" /></div>
        <MdMoreVert className="ml-[20px] size-[25px]" />
      </div>
    </div>
  );
}

/* ---------- page ---------- */
const btn = "flex items-center rounded-[7px] border border-[#d0d7de] bg-[#f6f8fa]";
const t14 = "text-[16.8px] tracking-[-0.2px]";
const t12 = "text-[14.4px] tracking-[-0.1px]";

const nav: [keyof typeof P, string, string][] = [
  ["code", "Code", "w-[101px]"], ["issue", "Issues", "w-[107px]"], ["pr", "Pull requests", "w-[162px]"],
  ["play", "Actions", "w-[119px]"], ["table", "Projects", "w-[123px]"], ["book", "Wiki", "w-[95px]"],
  ["shield", "Security", "w-[124px]"], ["graph", "Insights", "w-[122px]"], ["gear", "Settings", "w-[100px]"],
];

function Header() {
  return (
    <div className="h-[130px] border-b border-[#d0d7de] bg-[#f6f8fa]">
      <div className="flex h-[80px] items-center pl-[20px]">
        <div className={`${btn} h-10 w-10 justify-center`}><Oct p="bars" /></div>
        <Oct p="github" className="ml-[20px] size-10 text-[#1f2328]" />
        <span className={`ml-[20px] w-[101px] whitespace-nowrap pt-[2px] ${t14} text-[#1f2328]`}>soso1554848</span>
        <span className={`ml-[11px] w-[16px] pt-[2px] ${t14} text-[#636c76]`}>/</span>
        <span className="pt-[2px] text-[16.8px] font-semibold tracking-[-0.25px] text-[#1f2328]">1122-wp2-2N_31</span>
        <div className={`${btn} absolute left-[786px] h-10 w-[438px] pl-[9px] text-[#636c76] ${t14}`}>
          <Oct p="search" />
          <span className="ml-[10px] w-[40px] pt-[1px]">Type</span>
          <span className="mt-[2px] flex h-[20px] w-[16px] items-center justify-center rounded-[4px] border border-[#636c76] text-[14px]">/</span>
          <span className="ml-[5px] pt-[1px]">to search</span>
          <div className="ml-auto h-5 w-px bg-[#d0d7de]" />
          <svg viewBox="0 0 18 16" className="ml-[11px] mr-[10px] h-4 w-[18px]"><path d="m1 1 7 7-7 7M10 14.500h8" fill="none" stroke="currentColor" strokeWidth="1.900" /></svg>
        </div>
        <div className="absolute left-[1239px] flex items-center">
          <div className="h-[25px] w-px bg-[#d0d7de]" />
          <div className={`${btn} ml-[15px] h-10 w-[72px] gap-[10px] pl-[10px]`}><Oct p="plus" /><Oct p="caret" /></div>
          <div className={`${btn} ml-[10px] size-10 justify-center`}><Oct p="issue" /></div>
          <div className={`${btn} ml-[10px] size-10 justify-center`}><Oct p="pr" /></div>
          <div className={`${btn} ml-[10px] size-10 justify-center`}><Oct p="inbox" /></div>
          <Avatar className="ml-[9px] size-[42px]" />
        </div>
      </div>
      <div className="relative flex h-[49px] pl-[30px]">
        {nav.map(([p, label, w], i) => (
          <div key={label} className={`flex h-[41px] items-center gap-[11px] whitespace-nowrap text-[#1f2328] ${t14} ${w} ${i === 0 ? "font-semibold" : ""}`}>
            <Oct p={p} />{label}
          </div>
        ))}
        <div className="absolute bottom-[-1px] left-[20px] h-[2px] w-[91px] bg-[#fd8c73]" />
      </div>
    </div>
  );
}

function Count({ n, className = "" }: { n: number; className?: string }) {
  return <span className={`flex size-[25px] shrink-0 items-center justify-center rounded-full bg-[#e7eaee] ${className}`}>{n}</span>;
}

function TitleBar() {
  return (
    <div className="flex h-[79px] items-center border-b border-[#d8dee4] pl-[39px] pr-[49px]">
      <Avatar className="size-8" />
      <span className="ml-[8px] w-[185px] whitespace-nowrap pt-[2px] text-[24px] font-semibold tracking-[-0.3px] text-[#1f2328]">1122-wp2-2N_31</span>
      <span className={`ml-[9px] flex h-[24px] w-[61px] items-center justify-center rounded-full border border-[#d0d7de] pt-[1px] ${t12} font-medium text-[#636c76]`}>Public</span>
      <div className={`mb-[3px] ml-auto flex gap-[10px] text-[14.4px] font-semibold tracking-[-0.3px] text-[#25292e]`}>
        <div className={`${btn} h-[35px] w-[83px] pl-[16px]`}><Oct p="pin" /><span className="ml-[10px]">Pin</span></div>
        <div className={`${btn} h-[35px] w-[167px] pl-[15px]`}><Oct p="eye" /><span className="ml-[4px] w-[66px]">Unwatch</span><Count n={1} /><Oct p="caret" className="ml-[5px] mt-[2px] size-5 text-[#25292e]" /></div>
        <div className={`${btn} h-[35px] w-[164px]`}>
          <div className="flex h-full w-[122px] items-center border-r border-[#d0d7de] pl-[15px] text-[#8c959f]"><Oct p="fork" className="size-5 text-[#8c959f]" /><span className="ml-[10px] w-[36px] font-medium tracking-[0px]">Fork</span><Count n={0} className="font-medium" /></div>
          <Oct p="caret" className="ml-[10px] size-5 text-[#57606a]" />
        </div>
        <div className={`${btn} h-[35px] w-[167px]`}>
          <div className="flex h-full w-[124px] items-center border-r border-[#d0d7de] pl-[15px]"><Oct p="star" /><span className="ml-[14px] w-[34px]">Star</span><Count n={0} /></div>
          <Oct p="caret" className="ml-[10px] size-5 text-[#57606a]" />
        </div>
      </div>
    </div>
  );
}

function FileRow({ p, name, msg, date }: { p: "folder" | "file"; name: string; msg: string; date: string }) {
  return (
    <div className={`flex h-[51px] items-center border-t border-[#d0d7de] pl-[20px] pr-[20px] text-[#636c76] ${t14}`}>
      <Oct p={p} className={p === "folder" ? "size-5 text-[#54aeff]" : "size-5 text-[#636c76]"} />
      <span className="ml-[13px] w-[393px] text-[#1f2328]">{name}</span>
      <span>{msg}</span>
      <span className="ml-auto tracking-[0px]">{date}</span>
    </div>
  );
}

function Main() {
  return (
    <div className="w-[1067px]">
      <div className={`flex h-10 items-center ${t14} text-[#636c76]`}>
        <div className={`${btn} h-10 w-[131px] pl-[16px] font-semibold text-[#25292e]`}><Oct p="branch" /><span className="ml-[9px] w-[49px] pt-[1px]">main</span><Oct p="caret" /></div>
        <Oct p="branch" className="ml-[16px] size-5 text-[#636c76]" />
        <span className="ml-[4px] w-[81px] whitespace-nowrap pt-[2px] font-medium tracking-[-0.3px]"><b className="font-semibold text-[#1f2328]">1</b> Branch</span>
        <Oct p="tag" className="size-5 text-[#636c76]" />
        <span className="ml-[4px] pt-[2px] font-medium tracking-[-0.3px]"><b className="font-semibold text-[#1f2328]">0</b> Tags</span>
        <div className="ml-auto flex h-10 w-[285px] items-center rounded-[7px] border border-[#d0d7de] pl-[15px] pr-[8px]">
          <Oct p="search" /><span className="ml-[10px] flex-1 pt-[1px]">Go to file</span>
          <span className="mt-[2px] flex h-[22px] w-[21px] items-center justify-center rounded-[7px] border border-[#e4e8ec] bg-[#f6f8fa] font-['Liberation_Mono'] text-[14px] text-[#1f2328]">t</span>
        </div>
        <div className={`${btn} ml-[10px] size-10 justify-center`}><Oct p="plus" /></div>
        <div className="ml-[10px] flex h-10 w-[128px] items-center rounded-[7px] bg-[#1f883d] pl-[16px] font-semibold text-white"><Oct p="code" className="size-5" /><span className="ml-[9px] w-[52px] pt-[1px]">Code</span><Oct p="caret" className="size-5" /></div>
      </div>

      <div className="mt-[20px] overflow-hidden rounded-[7px] border border-[#d0d7de]">
        <div className={`flex h-[65px] items-center bg-[#f6f8fa] pl-[15px] ${t14} text-[#636c76]`}>
          <Avatar className="size-[27px]" />
          <span className="ml-[9px] w-[112px] font-semibold tracking-[-0.2px] text-[#1f2328]">soso1554848</span>w15
          <span className="ml-auto w-[166px] whitespace-nowrap text-[14.4px]">f6a6c70 · 2 weeks ago</span>
          <Oct p="history" />
          <span className="ml-[5px] w-[107px] text-[14.4px] font-semibold tracking-[-0.2px] text-[#25292e]">50 Commits</span>
        </div>
        <FileRow p="folder" name="demo" msg="w15" date="2 weeks ago" />
        <FileRow p="file" name="README.md" msg="Initial commit" date="4 months ago" />
      </div>

      <div className="mt-[20px] h-[226px] rounded-[7px] border border-[#d0d7de]">
        <div className="flex h-[61px] items-end justify-between border-b border-[#d0d7de] pl-[10px] pr-[27px]">
          <div className={`flex h-[60px] w-[120px] items-center border-b-2 border-[#fd8c73] pl-[10px] ${t14} font-semibold text-[#1f2328]`}><Oct p="book" /><span className="ml-[10px] pt-[4px]">README</span></div>
          <Oct p="pencil" className="mb-[20px] size-5 text-[#636c76]" />
        </div>
        <div className="mx-[40px] mt-[39px] h-[64px] border-b border-[#d8dee4] text-[38.600px] font-semibold leading-[54px] tracking-[-0.550px] text-[#1f2328]">1122-wp2-2N_31</div>
      </div>
    </div>
  );
}

const facts: [keyof typeof P, string, string][] = [
  ["book", "", "Readme"], ["pulse", "", "Activity"], ["star", "0", "stars"], ["eye", "1", "watching"], ["fork", "0", "forks"],
];

function Section({ title, note, link }: { title: string; note: string; link: string }) {
  return (
    <div className="h-[136px] border-t border-[#d8dee4] pt-[21px]">
      <div className="text-[19px] font-semibold leading-[32px] tracking-[-0.2px] text-[#1f2328]">{title}</div>
      <div className={`mt-[18px] leading-[22px] ${t12} text-[#636c76]`}>{note}</div>
      <div className={`leading-[22px] ${t12} text-[#0969da] underline underline-offset-[3px]`}>{link}</div>
    </div>
  );
}

function Sidebar() {
  return (
    <div className="ml-[30px] w-[370px]">
      <div className="flex h-[40px] items-center justify-between"><span className="pt-[2px] text-[19px] font-semibold tracking-[0px] text-[#1f2328]">About</span><Oct p="gear" /></div>
      <div className="mt-[15px] whitespace-nowrap text-[19.200px] italic leading-[33px] tracking-[0.04px] text-[#636c76]">No description, website, or topics provided.</div>
      <div className="mt-[12px] h-[196px]">
        {facts.map(([p, n, label]) => (
          <div key={label} className={`flex h-[36.200px] items-center ${t14} text-[#636c76]`}>
            <Oct p={p} /><span className="ml-[15px]">{n && <b className="font-semibold">{n} </b>}{label}</span>
          </div>
        ))}
      </div>
      <Section title="Releases" note="No releases published" link="Create a new release" />
      <Section title="Packages" note="No packages published" link="Publish your first package" />
    </div>
  );
}

const foot: [string, string][] = [
  ["© 2024 GitHub, Inc.", "w-[150px]"], ["Terms", "w-[58px]"], ["Privacy", "w-[67px]"], ["Security", "w-[72px]"], ["Status", "w-[61px]"],
  ["Docs", "w-[52px]"], ["Contact", "w-[61px]"], ["Manage cookies", "w-[128px]"], ["Do not share my personal information", "w-[260px]"],
];

function BrowserWindow() {
  return (
    <div className="absolute left-[308px] top-0 flex h-[1022px] w-[1569px] flex-col border border-[#2c4f66] border-t-[#63666d] bg-white shadow-[0_4px_16px_rgba(0,0,0,.45)]">
      <TabStrip />
      <Toolbar />
      <div className="flex flex-1">
        <div className="relative flex w-[1547px] flex-col">
          <Header />
          <TitleBar />
          <div className="mt-[30px] flex pl-[40px]"><Main /><Sidebar /></div>
          <div className={`absolute bottom-[14px] left-[297px] flex h-[30px] items-center whitespace-nowrap ${t12} text-[#636c76]`}>
            <Oct p="github" className="mr-[11px] size-[30px] text-[#636c76]" />
            {foot.map(([t, w]) => <span key={t} className={`pt-[2px] ${w}`}>{t}</span>)}
          </div>
        </div>
        <div className="flex w-5 flex-col items-center bg-[#f1f1f1]">
          <div className="mt-[9px] h-0 w-0 border-x-[5px] border-b-[5px] border-x-transparent border-b-[#a3a3a3]" />
          <div className="mt-[7px] h-[835px] w-[17px] bg-[#c1c1c1]" />
          <div className="mb-[8px] mt-auto h-0 w-0 border-x-[5px] border-t-[5px] border-x-transparent border-t-[#505050]" />
        </div>
      </div>
    </div>
  );
}

/* ---------- taskbar ---------- */
function Slot({ children, className = "" }: { children?: React.ReactNode; className?: string }) {
  return <div className={`flex h-[50px] items-center justify-center border-b-[3px] pt-[2px] ${className}`}>{children}</div>;
}

function Taskbar() {
  return (
    <div className="absolute bottom-0 left-0 flex h-[50px] w-full items-center bg-[linear-gradient(90deg,#21363f_0%,#22363f_25%,#1f3240_60%,#1b2840_85%,#1c2740_100%)] text-white">
      <Slot className="w-[60px] border-transparent"><svg viewBox="0 0 20 20" className="size-5" fill="#fff"><path d="M0 3l8.500-1.200v7.700H0ZM9.500 1.600 20 0v9.500H9.500ZM0 10.500h8.500v7.700L0 17ZM9.500 10.500H20V20L9.500 18.400Z" /></svg></Slot>
      <Slot className="w-[60px] border-transparent"><svg viewBox="0 0 20 20" className="size-5" fill="none" stroke="#fff" strokeWidth="1.500"><circle cx="13" cy="7" r="6.200" /><path d="M8.500 11.500.5 19.500" /></svg></Slot>
      <Slot className="w-[60px] border-transparent"><svg viewBox="0 0 20 20" className="size-5" fill="none" stroke="#fff" strokeWidth="1.300"><path d="M.7 0v3.500h12V0M.7 20v-3.500h12V20M.7 5.500h12v9H.7ZM18 0v4M18 10.500V20" /><path d="M16.500 6h3v3h-3Z" fill="#fff" stroke="none" /></svg></Slot>
      <Slot className="w-[66px] border-transparent pl-[2px]"><Edge className="size-[30px]" /></Slot>
      <Slot className="w-[61px] border-[#76b9ed] bg-[#506169] pr-px"><Chrome className="size-[30px]" /></Slot>
      <Slot className="w-[62px] border-transparent"><Firefox className="size-[31px]" /></Slot>
      <Slot className="w-[62px] border-transparent">
        <svg viewBox="0 0 28 24" className="h-6 w-7"><path d="M0 1q0-1 1-1h10l2 3H0Z" fill="#e09a13" /><path d="M0 4h12l2-2h14v21H0Z" fill="#fcd462" /><path d="M4 24V14q0-2 2-2h16q2 0 2 2v10h-5v-5H9v5Z" fill="#3a93d8" /></svg>
      </Slot>
      <Slot className="ml-[6px] w-[51px] border-[#76b9ed]"><Teams className="size-[31px]" status /></Slot>
      <Slot className="ml-[11px] w-[41px] border-[#76b9ed] pl-[8px]">
        <svg viewBox="0 0 30 30" className="size-[30px]"><path d="m1 20 3 2.500L22 8V0L1 19Z" fill="#0a6fb8" /><path d="m1 9 3-2.500L22 22v8L1 11Z" fill="#1089d4" /><path d="M22 0l8 3v24l-8 3Z" fill="#2aa7f3" /></svg>
      </Slot>
      <Slot className="w-[10px] border-[#5e94bd]" />
      <Slot className="ml-[11px] w-[51px] border-[#76b9ed] pr-[2px]">
        <svg viewBox="0 0 24 30" className="h-[30px] w-6"><clipPath id="drop"><path d="M13 0q1 5 6 10 5 6 5 10a12 10 0 0 1-24 0q0-6 6-11 6-4 7-9Z" /></clipPath><g clipPath="url(#drop)"><rect width="24" height="30" fill="#ea3f73" /><path d="M8 0h8v12L8 8Z" fill="#ffcd05" /><path d="M0 12q8 0 14 5t10-1v14H0Z" fill="#8c52c7" /><path d="M0 18q7 0 12 6t12 0v6H0Z" fill="#22b5ee" /></g></svg>
      </Slot>

      <div className="ml-auto flex h-full items-center">
        <svg viewBox="0 0 30 20" className="h-5 w-[30px]" fill="none" stroke="#fff" strokeWidth="2"><path d="M25 3h4v13a3 3 0 0 1-4 0V1H1v15q0 3 3 3h23" /><path d="M4.500 5h17M15 9.500h7M15 12.500h7M15 15.500h7" strokeWidth="1.500" /><rect x="5" y="9" width="6.500" height="6" /></svg>
        <svg viewBox="0 0 16 10" className="ml-[22px] h-[10px] w-4"><path d="m.5 9 7.500-8 7.500 8" fill="none" stroke="#fff" strokeWidth="1.300" /></svg>
        <svg viewBox="0 0 20 17" className="ml-[12px] h-[17px] w-5" fill="none" stroke="#fff" strokeWidth="1.200"><path d="M6 1h13.500v11H3V6M.6.6h4v5h-4ZM11 12v4M7 16.200h8M3 16.200h2" /></svg>
        <svg viewBox="0 0 21 16" className="ml-[10px] h-4 w-[21px]" fill="none" stroke="#fff" strokeWidth="1.200"><path d="M.6 5h3.500l4-4v14l-4-4H.6ZM11 5.500q2 2.500 0 5M14 3q4 5 0 10M17 .6q6 7.400 0 14.800" /></svg>
        <span className="ml-[8px] w-[20px] font-['Noto_Sans_CJK_TC'] text-[18.500px] font-bold">英</span>
        <span className="ml-[16px] flex size-5 items-center justify-center bg-white font-['Noto_Sans_CJK_TC'] text-[15px] leading-none text-black">ㄅ</span>
        <div className="ml-[14px] flex w-[102px] flex-col items-center whitespace-nowrap pr-[2px] text-[15.800px] leading-[23px]">
          <span className="tracking-[-0.3px]">下午 07:07</span><span>2024-06-12</span>
        </div>
        <svg viewBox="0 0 20 20" className="ml-[14px] h-5 w-5"><path d="M.6.6h18.800v15.400H12.500L10 18.800 7.500 16H.6Z" fill="none" stroke="#fff" strokeWidth="1.200" /></svg>
        <div className="ml-[25px] mr-[5px] h-full w-px bg-[#7c8594]" />
      </div>
    </div>
  );
}

export default function App() {
  return (
    <div className="relative h-[1080px] w-[1920px] overflow-hidden bg-[linear-gradient(90deg,#00aaf9_0%,#00aefb_18%,#009be6_35%,#0077cf_60%,#0450bf_85%,#0440b8_100%)] font-['Open_Sans','Noto_Sans_CJK_TC',sans-serif]">
      <div className="absolute left-0 top-0 h-[1030px] w-[309px] bg-[linear-gradient(180deg,#009ef7_0%,#00a8fa_25%,#00b4ff_55%,#00b6ff_75%,#00aef7_100%)]" />
      <div className="absolute left-[-1px] top-[7px] grid auto-rows-[123px] grid-cols-[95px_95px_95px_95px]">
        {desktop.map((item, i) => <DesktopIcon key={i} item={item} />)}
      </div>
      <BrowserWindow />
      <div className="absolute left-[348px] top-[88px] h-[113px] w-[384px] border-4 border-[#ed1c24]" />
      <div className="absolute left-[1249px] top-[408px] h-[82px] w-[184px] border-4 border-[#ed1c24]" />
      <Taskbar />
    </div>
  );
}
